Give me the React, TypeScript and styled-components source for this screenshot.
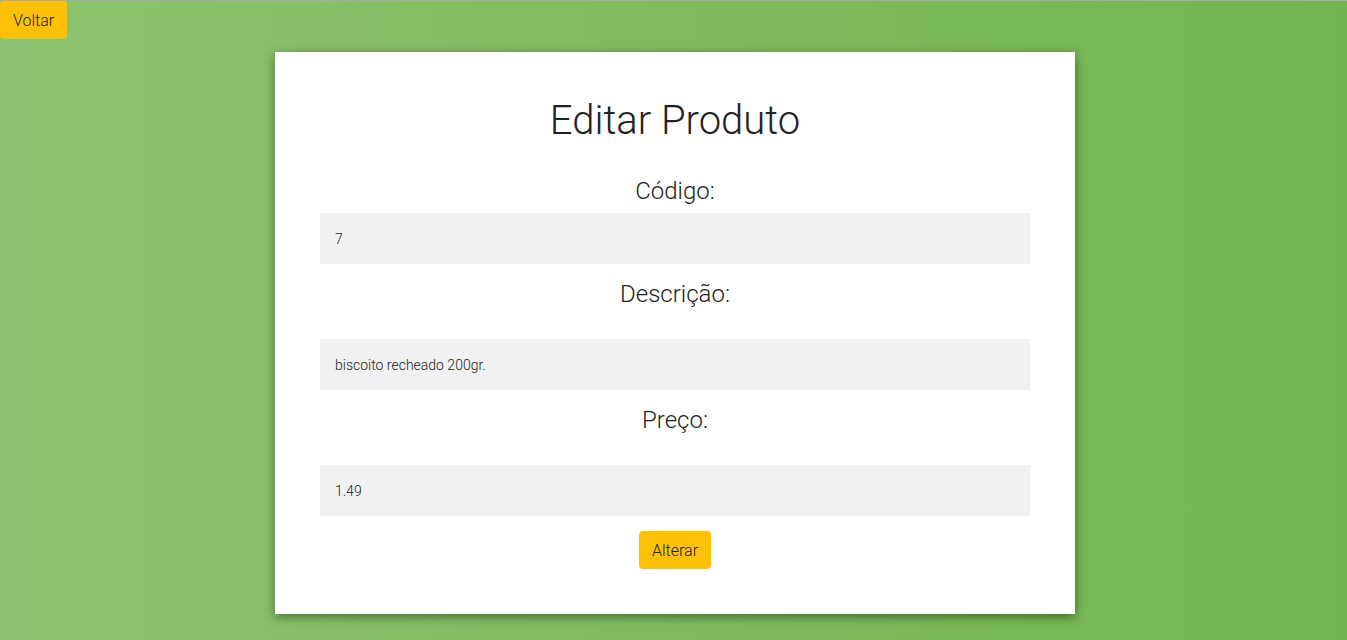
import React from "react";
import styled, { createGlobalStyle } from "styled-components";

const Global = createGlobalStyle`
  html, body { margin: 0; padding: 0; }
  body { font-family: Roboto, "Noto Sans", sans-serif; }
  * { box-sizing: border-box; }
`;

const Page = styled.div`
  min-height: 640px;
  border-top: 1px solid #a9aaa9;
  background: linear-gradient(to right, #8dc370 0%, #80bc5f 50%, #73b651 100%);
  display: flex;
  flex-direction: column;
  align-items: flex-start;
`;

const Button = styled.button`
  font-family: Roboto, sans-serif;
  font-weight: 300;
  font-size: 16px;
  color: #222;
  background: #ffc107;
  border: none;
  border-radius: 4px;
  height: 38px;
  padding: 0 13px;
  cursor: pointer;
`;

const Card = styled.form`
  align-self: center;
  width: 800px;
  margin: 13px 0 0 3px;
  background: #fff;
  box-shadow: 0 3px 10px rgba(0, 0, 0, 0.45);
  padding: 45px;
  display: flex;
  flex-direction: column;
  align-items: center;
`;

const Title = styled.h1`
  margin: 0 0 32px;
  font-size: 40px;
  line-height: 48px;
  font-weight: 300;
  color: #222;
`;

const Label = styled.label<{ $gap: number; $top: number }>`
  display: block;
  font-size: 24px;
  line-height: 28px;
  font-weight: 300;
  color: #222;
  margin-top: ${(p) => p.$top}px;
  margin-bottom: ${(p) => p.$gap}px;
`;

const Input = styled.input`
  width: 710px;
  height: 51px;
  border: none;
  outline: none;
  background: #f1f1f1;
  padding: 0 15px;
  font-family: Roboto, sans-serif;
  font-size: 14px;
  font-weight: 300;
  color: #222;
`;

const Submit = styled(Button)`
  margin-top: 15px;
`;

const fields = [
  { label: "Código:", value: "7", top: 0, gap: 8 },
  { label: "Descrição:", value: "biscoito recheado 200gr.", top: 16, gap: 31 },
  { label: "Preço:", value: "1.49", top: 16, gap: 31 },
];

export default function App() {
  return (
    <>
      <Global />
      <Page>
        <Button type="button">Voltar</Button>
        <Card onSubmit={(e) => e.preventDefault()}>
          <Title>Editar Produto</Title>
          {fields.map((f) => (
            <React.Fragment key={f.label}>
              <Label $top={f.top} $gap={f.gap}>
                {f.label}
              </Label>
              <Input defaultValue={f.value} />
            </React.Fragment>
          ))}
          <Submit type="submit">Alterar</Submit>
        </Card>
      </Page>
    </>
  );
}
